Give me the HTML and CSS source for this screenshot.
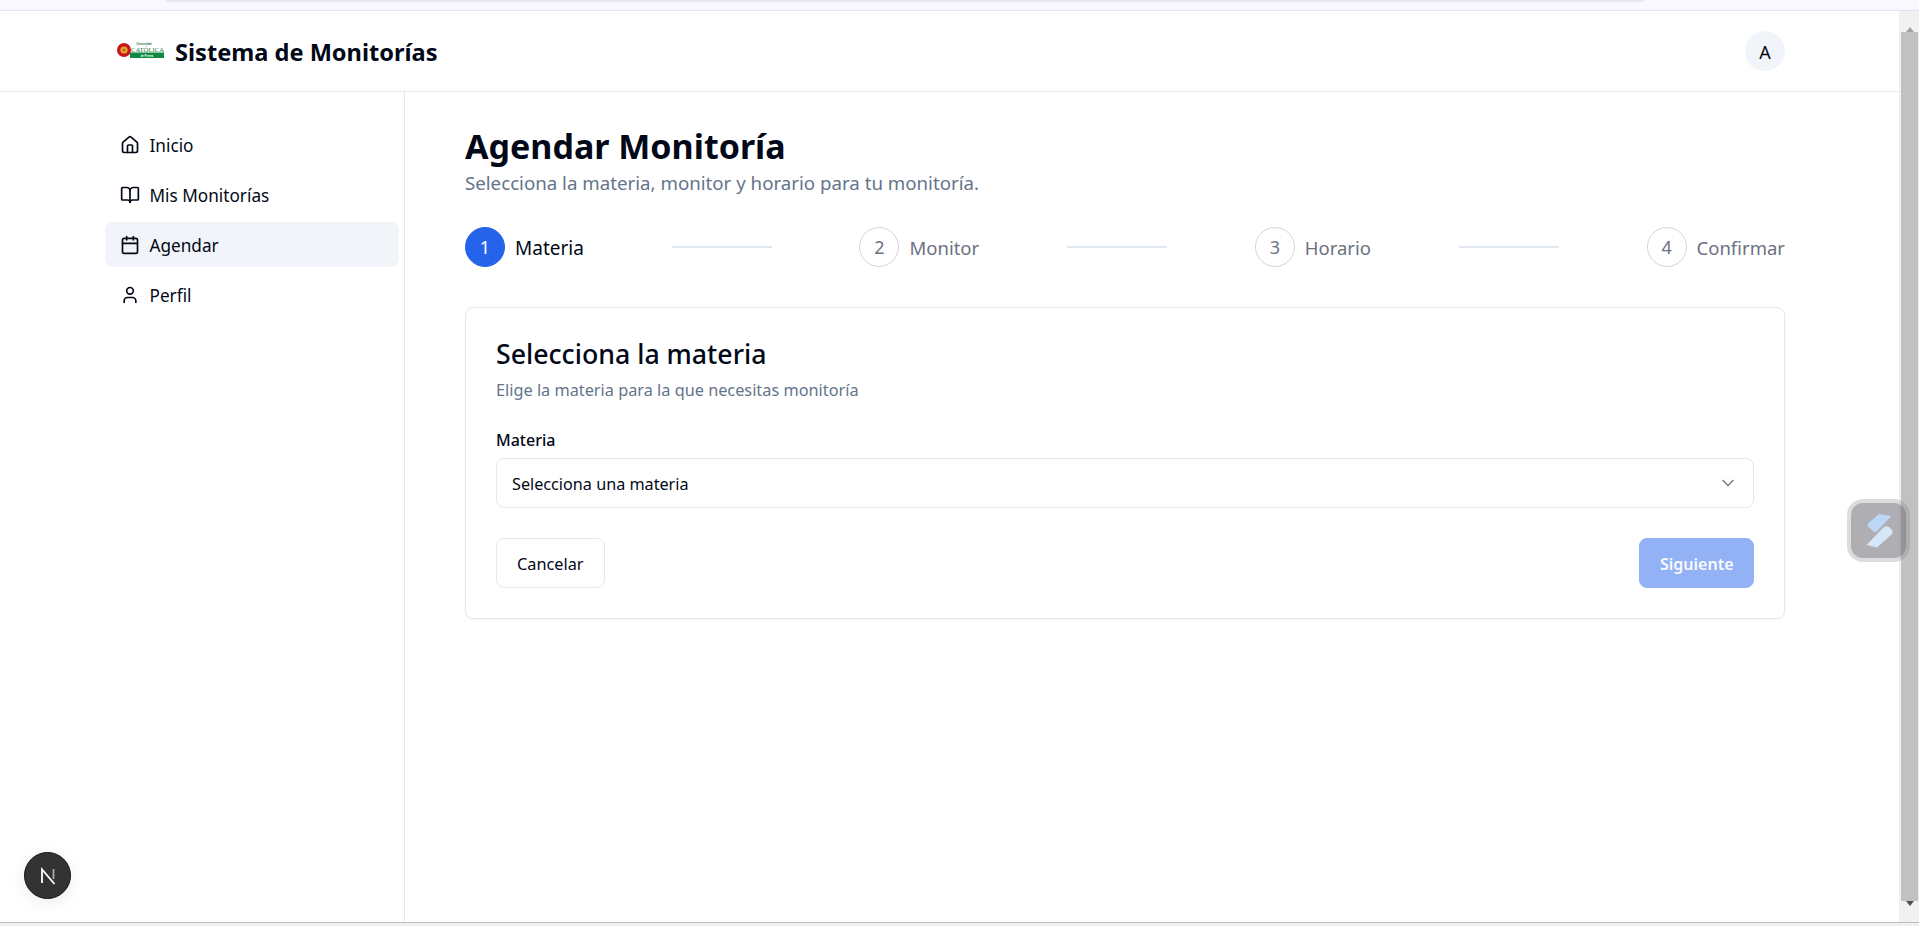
FILE: index.html
```html
<!DOCTYPE html>
<html lang="es">
<head>
  <meta charset="UTF-8">
  <title>Sistema de Monitorías</title>
  <link rel="stylesheet" href="styles.css">
</head>
<body>
  <div class="browser-strip"><div class="strip-tab"></div></div>

  <div class="window">
    <div class="page">
      <header class="topbar">
        <div class="brand">
          <svg class="logo" viewBox="0 0 47 16">
            <circle cx="7" cy="8" r="7" fill="#c8161d"/>
            <circle cx="7" cy="8" r="3.6" fill="#e9a825"/>
            <circle cx="7" cy="8" r="1.5" fill="#b5651d"/>
            <text x="27" y="3.2" class="logo-small" fill="#1d6b34">Universidad</text>
            <text x="14" y="9.8" class="logo-name" fill="#1d7a3c" textLength="33">CATÓLICA</text>
            <rect x="13" y="10.5" width="34" height="5.5" fill="#0d8a43"/>
            <text x="30" y="14.6" class="logo-small" fill="#fff">de Pereira</text>
          </svg>
          <span class="brand-name">Sistema de Monitorías</span>
        </div>
        <div class="avatar">A</div>
      </header>

      <div class="layout">
        <nav class="sidebar">
          <a class="nav-item">
            <svg class="icon" viewBox="0 0 24 24"><path d="M15 21v-8a1 1 0 0 0-1-1h-4a1 1 0 0 0-1 1v8"/><path d="M3 10a2 2 0 0 1 .709-1.528l7-5.999a2 2 0 0 1 2.582 0l7 5.999A2 2 0 0 1 21 10v9a2 2 0 0 1-2 2H5a2 2 0 0 1-2-2z"/></svg>
            <span>Inicio</span>
          </a>
          <a class="nav-item">
            <svg class="icon" viewBox="0 0 24 24"><path d="M12 7v14"/><path d="M3 18a1 1 0 0 1-1-1V4a1 1 0 0 1 1-1h5a4 4 0 0 1 4 4 4 4 0 0 1 4-4h5a1 1 0 0 1 1 1v13a1 1 0 0 1-1 1h-6a3 3 0 0 0-3 3 3 3 0 0 0-3-3z"/></svg>
            <span>Mis Monitorías</span>
          </a>
          <a class="nav-item active">
            <svg class="icon" viewBox="0 0 24 24"><path d="M8 2v4"/><path d="M16 2v4"/><rect x="3" y="4" width="18" height="18" rx="2"/><path d="M3 10h18"/></svg>
            <span>Agendar</span>
          </a>
          <a class="nav-item">
            <svg class="icon" viewBox="0 0 24 24"><path d="M19 21v-2a4 4 0 0 0-4-4H9a4 4 0 0 0-4 4v2"/><circle cx="12" cy="7" r="4"/></svg>
            <span>Perfil</span>
          </a>
        </nav>

        <main class="content">
          <h1>Agendar Monitoría</h1>
          <p class="subtitle">Selecciona la materia, monitor y horario para tu monitoría.</p>

          <div class="steps">
            <div class="step current"><span class="step-num">1</span><span class="step-name">Materia</span></div>
            <div class="step-line"></div>
            <div class="step"><span class="step-num">2</span><span class="step-name">Monitor</span></div>
            <div class="step-line"></div>
            <div class="step"><span class="step-num">3</span><span class="step-name">Horario</span></div>
            <div class="step-line"></div>
            <div class="step"><span class="step-num">4</span><span class="step-name">Confirmar</span></div>
          </div>

          <section class="card">
            <h2>Selecciona la materia</h2>
            <p class="card-desc">Elige la materia para la que necesitas monitoría</p>
            <label class="field-label">Materia</label>
            <div class="select">
              <span>Selecciona una materia</span>
              <svg class="chevron" viewBox="0 0 24 24"><path d="m6 9 6 6 6-6"/></svg>
            </div>
            <div class="actions">
              <button class="btn">Cancelar</button>
              <button class="btn primary">Siguiente</button>
            </div>
          </section>
        </main>
      </div>
    </div>

    <div class="scrollbar">
      <div class="arrow up"></div>
      <div class="thumb"></div>
      <div class="arrow down"></div>
    </div>
  </div>

  <div class="bottom-strip"></div>

  <div class="next-badge">
    <svg viewBox="0 0 24 24" width="24" height="24">
      <path d="M6 19V5.5L18.5 20" fill="none" stroke="#fff" stroke-width="1.8"/>
      <path d="M17.5 5v10" stroke="#aaa" stroke-width="1.8"/>
    </svg>
  </div>

  <div class="float-widget">
    <div class="float-inner">
      <svg viewBox="0 0 30 36" width="30" height="36">
        <path d="M15 1 27.5 3 13 18q-2 2-4 0L4.500 14q-2-2 0-4z" fill="#bcd8f5"/>
        <path d="M2.500 32 19 15q3-3 6-1l2.500 2.500q2 2.500 0 5L13 34.500z" fill="#d5e7f9"/>
      </svg>
    </div>
  </div>
</body>
</html>
```

FILE: styles.css
```css
* {
  box-sizing: border-box;
}
html, body {
  height: 100%;
}
body {
  margin: 0;
  font-family: "Noto Sans", "Open Sans", sans-serif;
  color: #020817;
  background: #fff;
  display: flex;
  flex-direction: column;
  overflow: hidden;
}
.browser-strip {
  height: 11px;
  flex: none;
  background: #f8f8fe;
  border-bottom: 1px solid #e3e3ec;
  padding: 0 275px 0 165px;
}
.strip-tab {
  height: 2px;
  background: #e6e9f4;
  border-radius: 0 0 4px 4px;
}
.window {
  flex: 1;
  display: flex;
  min-height: 0;
}
.bottom-strip {
  height: 4px;
  flex: none;
  background: #f0f0f0;
  border-top: 1px solid #bdbdbd;
}
.page {
  flex: 1;
  display: flex;
  flex-direction: column;
  min-width: 0;
}

/* header */
.topbar {
  height: 81px;
  flex: none;
  border-bottom: 1px solid #e2e8f0;
  display: flex;
  align-items: center;
  justify-content: space-between;
  padding: 0 114px 0 117px;
}
.brand {
  display: flex;
  align-items: center;
  gap: 11px;
}
.logo {
  width: 47px;
  height: 16px;
  margin-top: -2px;
}
.logo-small {
  font-size: 2.6px;
  font-family: "Liberation Sans", sans-serif;
  font-weight: 700;
  text-anchor: middle;
}
.logo-name {
  font-size: 6.6px;
  font-family: "Liberation Serif", serif;
}
.brand-name {
  font-size: 23.6px;
  font-weight: 700;
  margin-top: 1px;
}
.avatar {
  width: 40px;
  height: 40px;
  border-radius: 50%;
  background: #f1f5f9;
  display: flex;
  align-items: center;
  justify-content: center;
  font-size: 18px;
  padding-top: 2px;
}

/* sidebar and content */
.layout {
  flex: 1;
  display: flex;
  min-height: 0;
}
.sidebar {
  width: 300px;
  margin-left: 105px;
  flex: none;
  padding: 30px 5px 0 0;
  border-right: 1px solid #e2e8f0;
  display: flex;
  flex-direction: column;
  gap: 5px;
}
.nav-item {
  height: 45px;
  display: flex;
  align-items: center;
  gap: 10px;
  padding-left: 15px;
  border-radius: 8px;
  font-size: 17.2px;
}
.nav-item span {
  margin-top: 2px;
  margin-left: -0.5px;
}
.nav-item.active {
  background: #f1f5f9;
}
.icon {
  width: 20px;
  height: 20px;
  fill: none;
  stroke: #020817;
  stroke-width: 2;
  stroke-linecap: round;
  stroke-linejoin: round;
}
.content {
  flex: 1;
  padding: 34px 114px 0 60px;
}
h1 {
  margin: 0;
  font-size: 34px;
  line-height: 40px;
  font-weight: 700;
}
.subtitle {
  margin: 3px 0 0;
  font-size: 18.7px;
  line-height: 28px;
  color: #64748b;
}

/* steps */
.steps {
  display: flex;
  align-items: center;
  justify-content: space-between;
  margin-top: 30px;
}
.step {
  display: flex;
  align-items: center;
  gap: 10px;
  font-size: 18.5px;
  color: #6b7280;
}
.step-name {
  margin-top: 1px;
}
.step-num {
  width: 40px;
  height: 40px;
  border-radius: 50%;
  border: 1px solid #d1d5db;
  display: flex;
  align-items: center;
  justify-content: center;
  font-size: 18px;
}
.step.current {
  color: #020817;
  font-size: 19px;
}
.step.current .step-name {
  margin-top: 2px;
}
.step.current .step-num {
  background: #2563eb;
  border-color: #2563eb;
  color: #fff;
}
.step-line {
  width: 100px;
  height: 2px;
  background: #e2e8f0;
}

/* card */
.card {
  margin-top: 40px;
  border: 1px solid #e2e8f0;
  border-radius: 8px;
  padding: 30px;
  box-shadow: 0 1px 2px rgba(0, 0, 0, 0.04);
}
h2 {
  margin: 0;
  font-size: 26.7px;
  line-height: 32px;
  font-weight: 500;
}
.card-desc {
  margin: 8px 0 0;
  font-size: 16.3px;
  line-height: 24px;
  color: #64748b;
}
.field-label {
  display: block;
  margin-top: 26px;
  font-size: 16px;
  line-height: 24px;
  font-weight: 500;
}
.select {
  height: 50px;
  margin-top: 6px;
  border: 1px solid #e2e8f0;
  border-radius: 8px;
  padding: 2px 15px 0;
  display: flex;
  align-items: center;
  justify-content: space-between;
  font-size: 16.2px;
}
.chevron {
  width: 20px;
  height: 20px;
  margin-top: -2px;
  fill: none;
  stroke: #020817;
  stroke-width: 2;
  stroke-linecap: round;
  stroke-linejoin: round;
  opacity: 0.5;
}
.actions {
  display: flex;
  justify-content: space-between;
  margin-top: 30px;
}
.btn {
  height: 50px;
  padding: 2px 20px 0;
  border: 1px solid #e2e8f0;
  border-radius: 8px;
  background: #fff;
  color: #020817;
  font-family: inherit;
  font-size: 16.3px;
  font-weight: 400;
}
.btn.primary {
  padding: 2px 19.5px 0;
  background: #93b1f5;
  border-color: #93b1f5;
  color: #f8fafc;
  font-size: 16px;
  font-weight: 600;
}

/* browser scrollbar */
.scrollbar {
  width: 20px;
  flex: none;
  background: #f1f1f1;
  display: flex;
  flex-direction: column;
  align-items: center;
  padding: 0 1px 0 2px;
}
.thumb {
  flex: 1;
  width: 100%;
  background: #c1c1c1;
}
.arrow {
  height: 21px;
  flex: none;
  width: 0;
  border-left: 4px solid transparent;
  border-right: 4px solid transparent;
}
.arrow.up {
  border-bottom: 5px solid #a3a3a3;
  border-top: 8px solid transparent;
}
.arrow.down {
  border-top: 5px solid #505050;
  border-bottom: 8px solid transparent;
}

/* things floating over the page */
.next-badge {
  position: absolute;
  left: 24px;
  top: 852px;
  width: 47px;
  height: 47px;
  border-radius: 50%;
  background: #333;
  border: 1px solid #111;
  box-shadow: 0 4px 16px rgba(0, 0, 0, 0.08);
  display: flex;
  align-items: center;
  justify-content: center;
}
.float-widget {
  position: absolute;
  left: 1847px;
  top: 499px;
  width: 63px;
  height: 63px;
  border-radius: 16px;
  background: rgba(120, 120, 125, 0.25);
  padding: 4px;
}
.float-inner {
  height: 100%;
  border-radius: 12px;
  background: rgba(110, 110, 118, 0.42);
  display: flex;
  align-items: center;
  justify-content: center;
}
```
